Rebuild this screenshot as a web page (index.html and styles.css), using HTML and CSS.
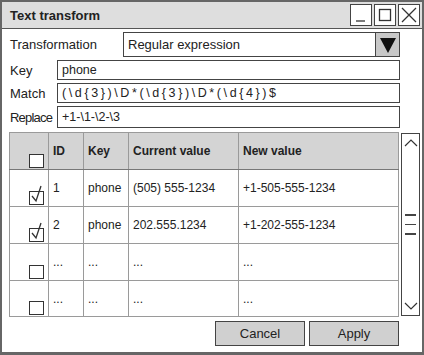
FILE: index.html
```html
<!doctype html>
<html lang="en">
<head>
	<meta charset="UTF-8">
	<title>Text transform</title>
	<link rel="stylesheet" href="styles.css">
</head>
<body>
	<div class="window">
		<div class="titlebar">
			<span class="title">Text transform</span>
			<div class="winbtns">
				<span class="winbtn"><svg width="20" height="20" viewBox="0 0 20 20"><path d="M5 16H14" stroke="#333" stroke-width="1.3" fill="none"/></svg></span>
				<span class="winbtn"><svg width="20" height="20" viewBox="0 0 20 20"><rect x="4.5" y="4.5" width="11" height="11" stroke="#333" stroke-width="1.3" fill="none"/></svg></span>
				<span class="winbtn"><svg width="20" height="20" viewBox="0 0 20 20"><path d="M3 3L17 17M17 3L3 17" stroke="#333" stroke-width="1.3" fill="none"/></svg></span>
			</div>
		</div>

		<div class="content">
			<div class="row row-combo">
				<label class="lbl lbl-wide">Transformation</label>
				<div class="combo">
					<span class="combo-text">Regular expression</span>
					<span class="combo-btn"><svg width="18" height="18" viewBox="0 0 18 18"><path d="M1 2H17L9 17Z" fill="#111"/></svg></span>
				</div>
			</div>
			<div class="row row-key">
				<label class="lbl">Key</label>
				<div class="field">phone</div>
			</div>
			<div class="row row-match">
				<label class="lbl">Match</label>
				<div class="field field-match">(\d{3})\D*(\d{3})\D*(\d{4})$</div>
			</div>
			<div class="row row-replace">
				<label class="lbl lbl-tight">Replace</label>
				<div class="field">+1-\1-\2-\3</div>
			</div>

			<div class="grid-area">
				<table class="grid">
					<colgroup>
						<col class="c-check">
						<col class="c-id">
						<col class="c-key">
						<col class="c-cur">
						<col class="c-new">
					</colgroup>
					<tr class="head">
						<th class="cell-check"><span class="check"></span></th>
						<th>ID</th>
						<th>Key</th>
						<th>Current value</th>
						<th>New value</th>
					</tr>
					<tr>
						<td class="cell-check"><span class="check checked"><svg width="16" height="20" viewBox="0 0 16 20"><path d="M3 12L7 17L12 2" stroke="#333" stroke-width="1.3" fill="none"/></svg></span></td>
						<td>1</td>
						<td>phone</td>
						<td>(505) 555-1234</td>
						<td>+1-505-555-1234</td>
					</tr>
					<tr>
						<td class="cell-check"><span class="check checked"><svg width="16" height="20" viewBox="0 0 16 20"><path d="M3 12L7 17L12 2" stroke="#333" stroke-width="1.3" fill="none"/></svg></span></td>
						<td>2</td>
						<td>phone</td>
						<td>202.555.1234</td>
						<td>+1-202-555-1234</td>
					</tr>
					<tr>
						<td class="cell-check"><span class="check"></span></td>
						<td>...</td>
						<td>...</td>
						<td>...</td>
						<td>...</td>
					</tr>
					<tr class="last">
						<td class="cell-check"><span class="check"></span></td>
						<td>...</td>
						<td>...</td>
						<td>...</td>
						<td>...</td>
					</tr>
				</table>
				<div class="scrollbar">
					<svg class="arrow" width="16" height="12" viewBox="0 0 16 12"><path d="M2 9L8 3L14 9" stroke="#333" stroke-width="1.2" fill="none"/></svg>
					<div class="thumb"><i></i><i></i><i></i></div>
					<svg class="arrow" width="16" height="12" viewBox="0 0 16 12"><path d="M2 3L8 9L14 3" stroke="#333" stroke-width="1.2" fill="none"/></svg>
				</div>
			</div>

			<div class="actions">
				<button class="btn">Cancel</button>
				<button class="btn">Apply</button>
			</div>
		</div>
	</div>
</body>
</html>
```

FILE: styles.css
```css
*{margin: 0;padding: 0;box-sizing: border-box;}
body{font-family: "Liberation Sans", Arial, sans-serif;color: #222;background: #fff;}

/* window frame */
.window{width: 424px;height: 355px;border: 2px solid #666;border-bottom-width: 3px;background: #fff;display: flex;flex-direction: column;}
.titlebar{height: 27px;background: #dedede;border-bottom: 1px solid #555;display: flex;align-items: center;justify-content: space-between;padding: 0 2px 0 8px;}
.title{font-weight: bold;font-size: 13px;}
.winbtns{display: flex;gap: 2px;}
.winbtn{width: 22px;height: 22px;border: 1px solid #444;background: #fff;display: flex;align-items: center;justify-content: center;}

.content{padding: 3px 0 0 7px;}

/* form rows */
.row{display: flex;align-items: center;width: 391px;}
.row-combo{height: 25px;}
.row-key{height: 20px;margin-top: 3px;}
.row-match{height: 20px;margin-top: 3px;}
.row-replace{height: 22px;margin-top: 3px;}
.lbl{width: 48px;font-size: 13px;padding-left: 1px;flex: none;white-space: nowrap;}
.lbl-wide{width: 114px;}
.lbl-tight{letter-spacing: -0.8px;}
.combo{flex: 1;height: 100%;border: 1px solid #444;display: flex;align-items: center;}
.combo-text{flex: 1;font-size: 13px;padding-left: 4px;}
.combo-btn{width: 24px;height: 100%;background: #c8c8c8;border-left: 1px solid #444;display: flex;align-items: center;justify-content: center;}
.field{flex: 1;height: 100%;border: 1px solid #444;font-size: 12.5px;padding-left: 4px;display: flex;align-items: center;white-space: nowrap;}
.field-match{letter-spacing: 2.6px;}

/* data grid */
.grid-area{display: flex;gap: 2px;margin-top: 4px;height: 184px;}
.grid{width: 390px;height: 184px;border-collapse: collapse;table-layout: fixed;border: 1px solid #666;font-size: 12px;}
.c-check{width: 39px;}
.c-id{width: 35px;}
.c-key{width: 45px;}
.c-cur{width: 110px;}
.grid th,.grid td{border: 1px solid #9a9a9a;height: 37px;text-align: left;padding-left: 4px;vertical-align: middle;}
.grid th{background: #d4d4d4;font-weight: bold;border-bottom-color: #777;}
.grid tr.last td{height: 36px;}
.grid .cell-check{text-align: right;vertical-align: bottom;padding: 0 4px 1px 0;}
.check{display: inline-block;width: 15px;height: 14px;border: 1.5px solid #333;background: #fff;position: relative;vertical-align: bottom;}
.check svg{position: absolute;left: -1px;top: -8px;}

.scrollbar{width: 19px;height: 183px;margin-top: 1px;border: 1.5px solid #444;display: flex;flex-direction: column;align-items: center;justify-content: space-between;padding: 3px 0;}
.thumb{display: flex;flex-direction: column;gap: 8px;}
.thumb i{display: block;width: 11px;height: 1.5px;background: #444;}

/* buttons */
.actions{display: flex;justify-content: flex-end;gap: 4px;width: 390px;margin-top: 5px;}
.btn{width: 90px;height: 25px;background: #d0d0d0;border: 1.5px solid #444;font-family: "Liberation Sans", Arial, sans-serif;font-size: 13px;color: #222;}
```
